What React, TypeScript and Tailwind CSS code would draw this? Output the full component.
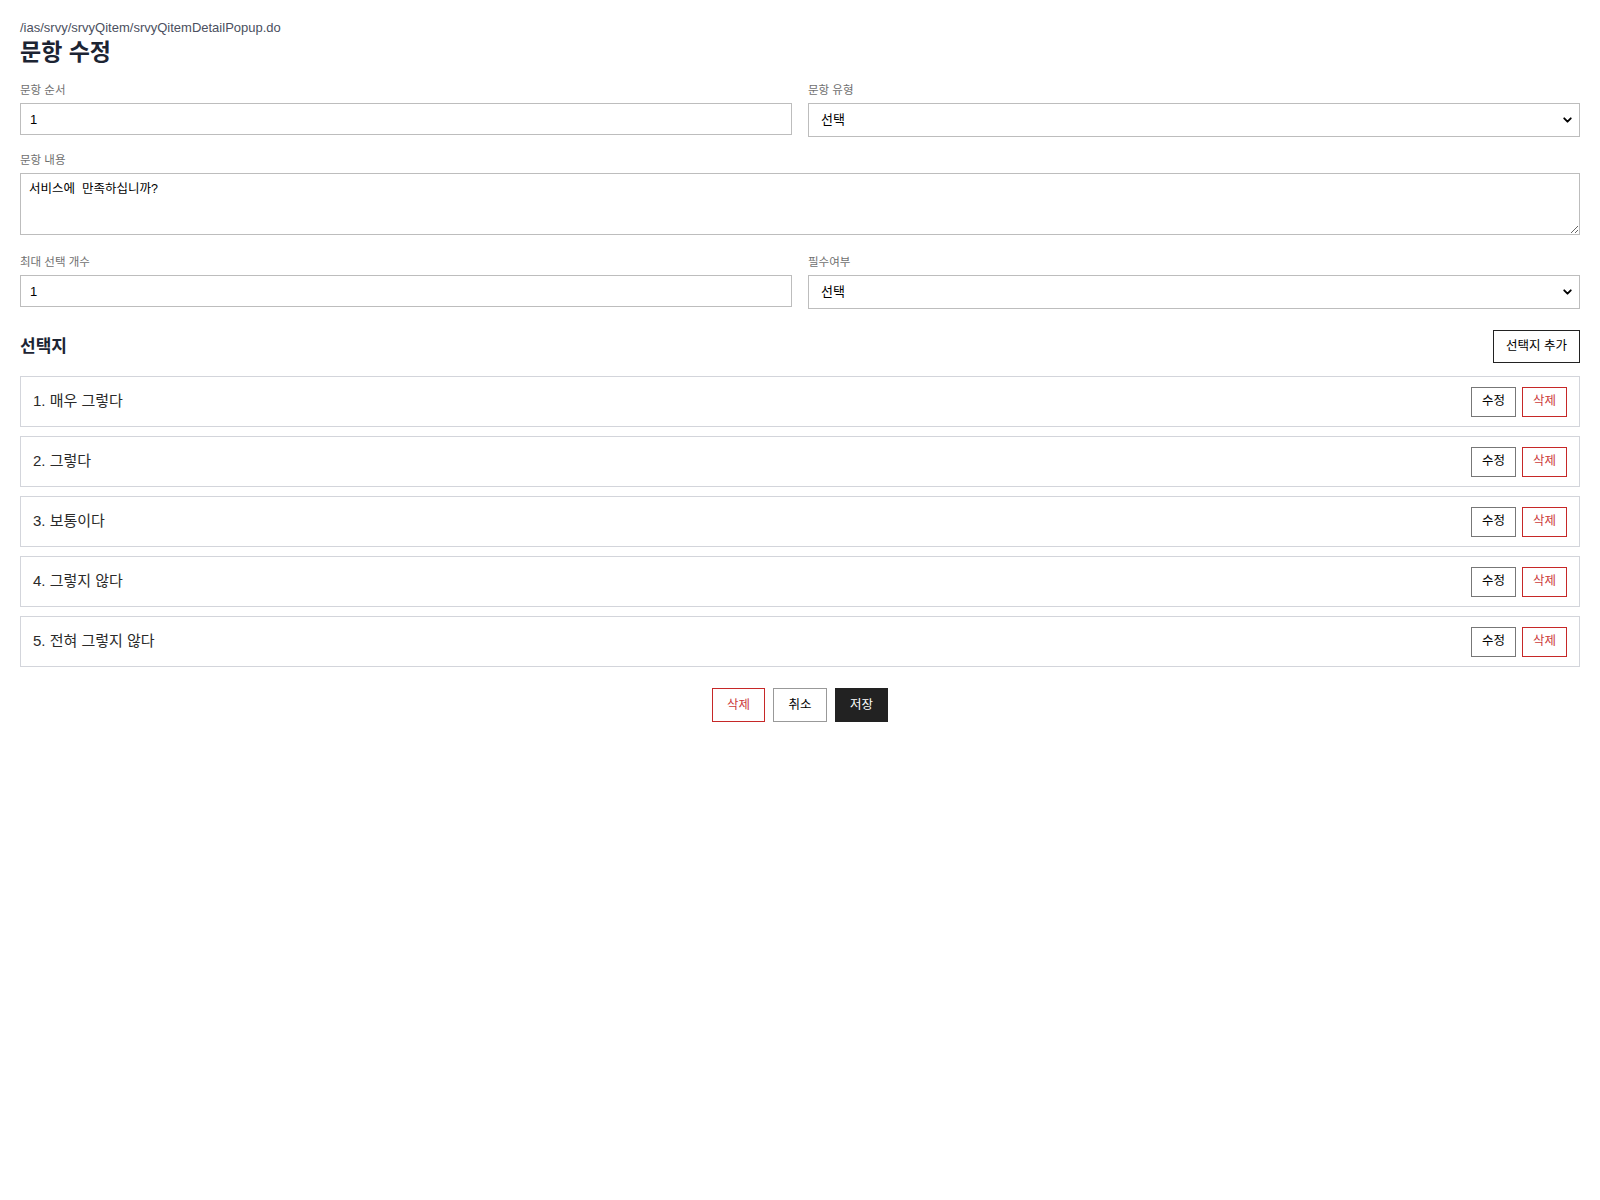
import { ChevronDown } from 'lucide-react';

const choices = ['매우 그렇다', '그렇다', '보통이다', '그렇지 않다', '전혀 그렇지 않다'];

function Label({ children }: { children: React.ReactNode }) {
    return <label className="mb-[6px] block text-[11.5px] leading-[14px] text-[#707070]">{children}</label>;
}

function SelectBox() {
    return (
        <div className="relative">
            <select className="block h-[34px] w-full appearance-none border border-[#bdbdbd] bg-white pl-3 pr-8 text-[13px] text-black outline-none">
                <option>선택</option>
                <option>예</option>
                <option>아니오</option>
            </select>
            <ChevronDown className="pointer-events-none absolute right-[6px] top-1/2 h-[13px] w-[13px] -translate-y-1/2 text-black" strokeWidth={3.5} />
        </div>
    );
}

export default function App() {
    return (
        <div className="min-h-screen bg-white px-5 pt-5 font-['Liberation_Sans','Noto_Sans_CJK_KR',sans-serif] text-[#222]">
            <p className="text-[13px] leading-4 text-[#4b5060]">/ias/srvy/srvyQitem/srvyQitemDetailPopup.do</p>
            <h1 className="text-[23px] font-bold leading-8 text-[#1c2433]">문항 수정</h1>

            <div className="mt-[15px] grid grid-cols-2 gap-4">
                <div>
                    <Label>문항 순서</Label>
                    <input
                        defaultValue="1"
                        className="block h-8 w-full border border-[#bdbdbd] px-[9px] text-[13px] text-black outline-none"
                    />
                </div>
                <div>
                    <Label>문항 유형</Label>
                    <SelectBox />
                </div>
            </div>

            <div className="mt-4">
                <Label>문항 내용</Label>
                <textarea
                    defaultValue="서비스에  만족하십니까?"
                    className="block h-[62px] w-full border border-[#bdbdbd] px-2 py-[6px] text-[12.5px] text-black outline-none"
                />
            </div>

            <div className="mt-5 grid grid-cols-2 gap-4">
                <div>
                    <Label>최대 선택 개수</Label>
                    <input
                        defaultValue="1"
                        className="block h-8 w-full border border-[#bdbdbd] px-[9px] text-[13px] text-black outline-none"
                    />
                </div>
                <div>
                    <Label>필수여부</Label>
                    <SelectBox />
                </div>
            </div>

            <div className="mt-[21px] flex h-[33px] items-center justify-between">
                <h2 className="text-[17px] font-bold text-[#1c2433]">선택지</h2>
                <button className="h-[33px] w-[87px] border border-[#222] text-[12.5px] text-black">선택지 추가</button>
            </div>

            <ul className="mt-[13px] flex flex-col gap-[9px]">
                {choices.map((label, i) => (
                    <li key={label} className="flex h-[51px] items-center justify-between border border-[#d3d5db] pl-3 pr-3">
                        <span className="text-[15px] text-[#2a2a2a]">
                            {i + 1}. {label}
                        </span>
                        <div className="flex gap-[6px]">
                            <button className="h-[30px] w-[45px] border border-[#777] text-[12.5px] text-black">수정</button>
                            <button className="h-[30px] w-[45px] border border-[#c62828] text-[12.5px] text-[#cc3b3b]">삭제</button>
                        </div>
                    </li>
                ))}
            </ul>

            <div className="mt-[21px] flex justify-center gap-2">
                <button className="h-[34px] w-[53px] border border-[#c62828] text-[12.5px] text-[#cc3b3b]">삭제</button>
                <button className="h-[34px] w-[54px] border border-[#999] text-[12.5px] text-black">취소</button>
                <button className="h-[34px] w-[53px] bg-[#222] text-[12.5px] text-white">저장</button>
            </div>
        </div>
    );
}
